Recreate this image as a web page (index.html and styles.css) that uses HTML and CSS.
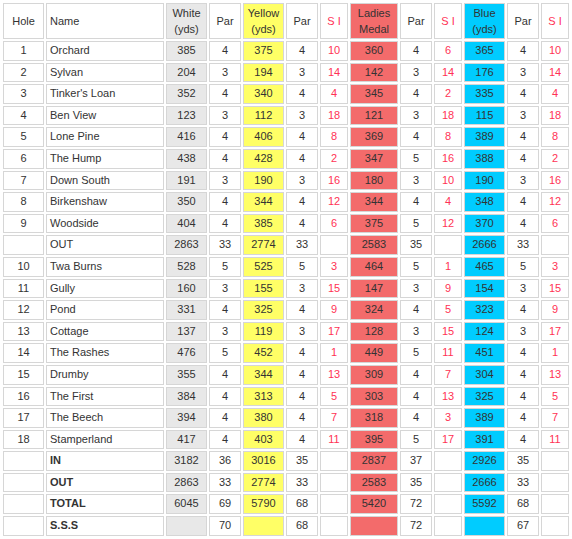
FILE: index.html
```html
<!DOCTYPE html>
<html>
<head>
<meta charset="utf-8">
<link rel="stylesheet" href="styles.css">
</head>
<body>
<table class="card">
  <colgroup>
    <col class="c-hole"><col class="c-name"><col class="c-yds"><col class="c-par"><col class="c-yds">
    <col class="c-par"><col class="c-si"><col class="c-lady"><col class="c-par"><col class="c-si">
    <col class="c-yds"><col class="c-par"><col class="c-si2">
  </colgroup>
  <thead>
    <tr>
      <th>Hole</th><th class="name">Name</th><th class="w">White<br>(yds)</th><th>Par</th><th class="y">Yellow<br>(yds)</th>
      <th>Par</th><th class="si">S I</th><th class="r">Ladies<br>Medal</th><th>Par</th><th class="si">S I</th>
      <th class="b">Blue<br>(yds)</th><th>Par</th><th class="si">S I</th>
    </tr>
  </thead>
  <tbody id="rows"></tbody>
</table>
<script src="app.js"></script>
</body>
</html>
```

FILE: app.js
```js
const data = [
  ["1","Orchard","385","4","375","4","10","360","4","6","365","4","10"],
  ["2","Sylvan","204","3","194","3","14","142","3","14","176","3","14"],
  ["3","Tinker's Loan","352","4","340","4","4","345","4","2","335","4","4"],
  ["4","Ben View","123","3","112","3","18","121","3","18","115","3","18"],
  ["5","Lone Pine","416","4","406","4","8","369","4","8","389","4","8"],
  ["6","The Hump","438","4","428","4","2","347","5","16","388","4","2"],
  ["7","Down South","191","3","190","3","16","180","3","10","190","3","16"],
  ["8","Birkenshaw","350","4","344","4","12","344","4","4","348","4","12"],
  ["9","Woodside","404","4","385","4","6","375","5","12","370","4","6"],
  ["","OUT","2863","33","2774","33","","2583","35","","2666","33",""],
  ["10","Twa Burns","528","5","525","5","3","464","5","1","465","5","3"],
  ["11","Gully","160","3","155","3","15","147","3","9","154","3","15"],
  ["12","Pond","331","4","325","4","9","324","4","5","323","4","9"],
  ["13","Cottage","137","3","119","3","17","128","3","15","124","3","17"],
  ["14","The Rashes","476","5","452","4","1","449","5","11","451","4","1"],
  ["15","Drumby","355","4","344","4","13","309","4","7","304","4","13"],
  ["16","The First","384","4","313","4","5","303","4","13","325","4","5"],
  ["17","The Beech","394","4","380","4","7","318","4","3","389","4","7"],
  ["18","Stamperland","417","4","403","4","11","395","5","17","391","4","11"],
  ["","IN","3182","36","3016","35","","2837","37","","2926","35","",true],
  ["","OUT","2863","33","2774","33","","2583","35","","2666","33","",true],
  ["","TOTAL","6045","69","5790","68","","5420","72","","5592","68","",true],
  ["","S.S.S","","70","","68","","","72","","","67","",true]
];
const cls = ["","name","w","","y","","si","r","","si","b","","si"];
const tb = document.getElementById("rows");
data.forEach(row => {
  const tr = document.createElement("tr");
  for (let i = 0; i < 13; i++) {
    const td = document.createElement("td");
    let c = cls[i];
    if (i === 1 && row[13]) c += " bold";
    if (c) td.className = c;
    td.textContent = row[i];
    tr.appendChild(td);
  }
  tb.appendChild(tr);
});
```

FILE: styles.css
```css
html, body {
  margin: 0;
  padding: 0;
  background: #fff;
}
.card {
  margin: 1px;
  border-collapse: separate;
  border-spacing: 2px;
  table-layout: fixed;
  width: 569px;
  font-family: "Liberation Sans", Arial, sans-serif;
  font-size: 11px;
  color: #333;
}
.c-hole { width: 41px; }
.c-name { width: 118px; }
.c-yds { width: 41px; }
.c-par { width: 32px; }
.c-si { width: 28px; }
.c-si2 { width: 28px; }
.c-lady { width: 48px; }
.card th, .card td {
  box-sizing: border-box;
  border: 1px solid #d6d6d6;
  text-align: center;
  vertical-align: middle;
  overflow: hidden;
  white-space: nowrap;
}
.card th {
  font-weight: normal;
  padding: 1px 0;
  line-height: 16px;
  height: 36px;
}
.card td {
  padding: 0;
  line-height: 17.6px;
  height: 19.6px;
}
.card .name {
  text-align: left;
  padding-left: 3px;
}
.card .bold { font-weight: bold; }
.w { background: #e8e8e8; }
.y { background: #ffff66; }
.r { background: #f36b6b; }
.b { background: #00ccff; }
.si { color: #ff3355; }
```
